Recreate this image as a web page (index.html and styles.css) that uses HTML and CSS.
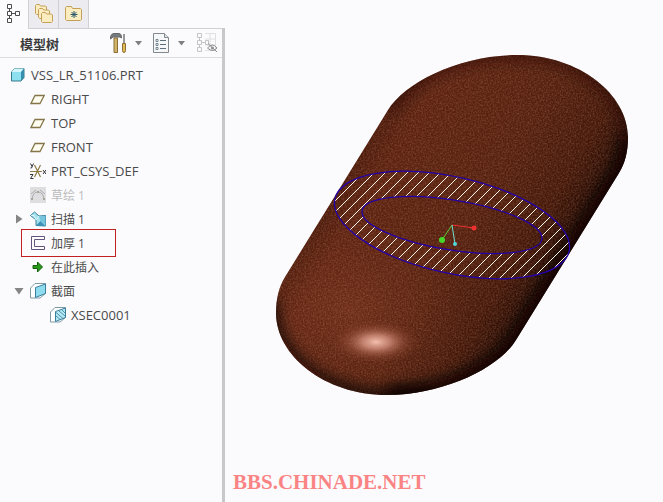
FILE: index.html
```
<!DOCTYPE html>
<html lang="zh-CN">
<head>
    <meta charset="UTF-8">
    <meta name="viewport" content="width=device-width, initial-scale=1.0">
    <title>VSS_LR_51106.PRT</title>
    <link rel="stylesheet" href="styles.css">
</head>
<body>
    <svg width="0" height="0" class="defs" aria-hidden="true">
        <symbol id="plane" viewBox="0 0 16 16">
            <path d="M5 4.500h9.200L10 12.500H1z" fill="#fffdf0" stroke="#85764a" stroke-width="1.300"/>
        </symbol>
        <symbol id="folder" viewBox="0 0 12 11">
            <path d="M.5 9.500v-8l1-1h3l1 1.500h5l1 1v6.500l-1 1h-9z" fill="#fbedc0" stroke="#c4a05a"/>
        </symbol>
        <symbol id="caret" viewBox="0 0 8 5">
            <path d="M0 0h7L3.500 4.500z" fill="#808080"/>
        </symbol>
    </svg>

    <aside class="sidebar">
        <nav class="tabs">
            <button class="tab active" aria-label="模型树">
                <svg width="16" height="20" viewBox="0 0 16 20" fill="#fff" stroke="#4c4c4c">
                    <path d="M3.500 5v10M5 9.500h6" fill="none"/>
                    <path d="M1.500.5h4v4h-4zM1.500 7.500h4v4h-4zM1.500 14.500h4v4h-4zM9.500 7.500h4v4h-4z"/>
                </svg>
            </button>
            <button class="tab" aria-label="文件夹浏览器">
                <svg width="20" height="20" viewBox="0 0 20 20">
                    <use href="#folder" x="1" y="0" width="12" height="11"/>
                    <use href="#folder" x="4" y="4" width="12" height="11"/>
                    <use href="#folder" x="7" y="8" width="12" height="11"/>
                </svg>
            </button>
            <button class="tab" aria-label="收藏夹">
                <svg width="18" height="16" viewBox="0 0 18 16">
                    <path d="M.5 13.500v-12l1-1h5l1 2h8l1 1v10l-1 1h-14z" fill="#fbedc0" stroke="#c4a05a"/>
                    <path d="M9 5v7M5.500 8.500h7M6.500 6l5 5M11.500 6l-5 5" stroke="#27566d"/>
                </svg>
            </button>
        </nav>

        <section class="panel">
            <header class="panel-head">
                <h1>模型树</h1>
                <button class="tool" aria-label="设置">
                    <svg width="17" height="21" viewBox="0 0 17 21">
                        <path d="M4 5h3.500v14.500H4z" fill="#d1b469" stroke="#8b6e32"/>
                        <path d="M.5 3.500Q1.500.5 4 .5h5q2 0 2.500 3v1.500l-1.500-1H3l-2.500 2z" fill="#777c80" stroke="#666"/>
                        <path d="M14 1v10" stroke="#777" stroke-width="1.500"/>
                        <path d="M12.500 10.500h3v7q0 2-1.500 2t-1.500-2z" fill="#e0bd57" stroke="#8b6e32"/>
                    </svg>
                    <svg class="caret" width="8" height="5"><use href="#caret"/></svg>
                </button>
                <button class="tool" aria-label="显示">
                    <svg width="17" height="21" viewBox="0 0 17 21">
                        <path d="M.5.5h11l4 4v15H.5z" fill="#f5f7f8" stroke="#82898e"/>
                        <path d="M11.500.5v4h4" fill="#dce2e5" stroke="#82898e"/>
                        <path d="M7 7.500h6M7 11.500h6M7 15.500h6" stroke="#5c6f7b"/>
                        <path d="M3 6.500h2v2H3zM3 10.500h2v2H3zM3 14.500h2v2H3z" fill="#fff" stroke="#5c6f7b" stroke-width=".8"/>
                    </svg>
                    <svg class="caret" width="8" height="5"><use href="#caret"/></svg>
                </button>
                <button class="tool" aria-label="隐藏" disabled>
                    <svg width="21" height="20" viewBox="0 0 21 20" fill="none" stroke="#c4c4c8">
                        <path d="M8 .5h10.500v17H8M8 6h10M8 12h10M13 1v16" stroke="#e0e0e4"/>
                        <path d="M.5.5h4v4h-4zM.5 7.500h4v4h-4zM.5 14.500h4v4h-4zM2.500 5v2M2.500 12v2M5 9.500h3M8.500 7.500h3v4h-3z"/>
                        <path d="M10.500 15q5-6 9.500 0-4.500 5-9.500 0zM11 10.500l9 8.500" stroke="#8e8e92"/>
                        <circle cx="15.500" cy="15" r="1.500" fill="#8e8e92" stroke="none"/>
                    </svg>
                </button>
            </header>

            <ul class="tree">
                <li class="row root">
                    <svg width="16" height="16" viewBox="0 0 16 16">
                        <path d="M1.500 5l3-3.500h9.500v9l-3 3.500H1.500z" fill="#8de0f0" stroke="#377b8b"/>
                        <path d="M1.500 5l3-3.500H14L11 5z" fill="#d2f6fb"/>
                        <path d="M11 5l3-3.500v9L11 14z" fill="#378eac"/>
                    </svg>
                    <span>VSS_LR_51106.PRT</span>
                </li>
                <li class="row"><svg width="16" height="16"><use href="#plane"/></svg><span>RIGHT</span></li>
                <li class="row"><svg width="16" height="16"><use href="#plane"/></svg><span>TOP</span></li>
                <li class="row"><svg width="16" height="16"><use href="#plane"/></svg><span>FRONT</span></li>
                <li class="row">
                    <svg width="16" height="16" viewBox="0 0 16 16" fill="none">
                        <path d="M0 8.500h12M4.500 2l6 12M10.500 2l-6 12" stroke="#8d7a45" stroke-width="1.200"/>
                        <path d="M.5.5L2 3.500M3.500.5L1.500 5H.5M0 11.500h3L.5 15.500h3M13 7l3 4M16 7l-3 4" stroke="#333"/>
                    </svg>
                    <span>PRT_CSYS_DEF</span>
                </li>
                <li class="row zh suppressed">
                    <svg width="16" height="16" viewBox="0 0 16 16">
                        <path d="M0 0h16v16H0z" fill="#dedee0"/>
                        <path d="M2 12Q3 5 8 5t6 7M1 7l5-4M10 3l5 4" fill="none" stroke="#adadad"/>
                        <path d="M1 11h2v2H1zM13 11h2v2h-2zM7 4h2v2H7z" fill="#aaa69e"/>
                    </svg>
                    <span>草绘 1</span>
                </li>
                <li class="row zh expandable">
                    <button class="twisty" aria-label="展开">
                        <svg width="8" height="10" viewBox="0 0 8 10"><path d="M1 .5v9L7.500 5z" fill="#858585"/></svg>
                    </button>
                    <svg width="16" height="16" viewBox="0 0 16 16">
                        <path d="M.5 4.500L4.500 1l4.500 4 6.500-.5v10.500L6 14.500V9z" fill="#a5e2f0" stroke="#397f9b" stroke-linejoin="round"/>
                        <path d="M6 14.500L10.500 10l5 5z" fill="#3c93b8"/>
                        <path d="M9 5l6.500 0v10L10.500 10z" fill="#74c5dd"/>
                        <path d="M1 4.500h3L6 9l3-4" fill="none" stroke="#eafcff" stroke-width=".8"/>
                    </svg>
                    <span>扫描 1</span>
                </li>
                <li class="row zh marked">
                    <svg width="16" height="16" viewBox="0 0 16 16" fill="#fff" stroke="#65547d">
                        <path d="M14.500 1.500H1.500v13h13v-3H4.500v-7h10z"/>
                    </svg>
                    <span>加厚 1</span>
                </li>
                <li class="row zh">
                    <svg width="16" height="16" viewBox="0 0 16 16">
                        <path d="M3 6.500h4.500v-3.500l5 5-5 5V9.500H3z" fill="#279b1a" stroke="#155e0c"/>
                    </svg>
                    <span>在此插入</span>
                </li>
                <li class="row zh expandable">
                    <button class="twisty" aria-label="折叠">
                        <svg width="10" height="8" viewBox="0 0 10 8"><path d="M.5 1h9L5 7.500z" fill="#858585"/></svg>
                    </button>
                    <svg width="16" height="16" viewBox="0 0 16 16">
                        <path d="M.5 5L5 .5h10.500v10L10 15H.5z" fill="#fff" stroke="#7f9aa5"/>
                        <path d="M5.500 4.500l10-3.500v9.500l-10 4z" fill="#8edced" stroke="#397f9b"/>
                    </svg>
                    <span>截面</span>
                </li>
                <li class="row child">
                    <svg width="16" height="16" viewBox="0 0 16 16">
                        <path d="M.5 5L5 .5h10.500v10L10 15H.5z" fill="#fff" stroke="#7f9aa5"/>
                        <path d="M5.500 4.500l10-3.500v9.500l-10 4z" fill="#b5e9f4" stroke="#397f9b"/>
                        <path d="M6 9l5 4M6 5.500l7 6M9 4l6 5M12 3l3 3" stroke="#357b98" stroke-width=".8"/>
                    </svg>
                    <span>XSEC0001</span>
                </li>
            </ul>
        </section>
    </aside>

    <main class="viewer">
        <svg class="model" viewBox="225 0 438 460" role="img" aria-label="模型">
            <defs>
                <clipPath id="bodyClip">
                    <path d="M285 277L388 110C405 82 460 55 517 55C580 55 628 95 628 137C628 152 625 163 619 173L516 340C499 368 444 395 387 395C324 395 276 355 276 313C276 298 279 287 285 277z"/>
                </clipPath>
                <linearGradient id="side" gradientUnits="userSpaceOnUse" x1="354" y1="165" x2="550" y2="285">
                    <stop offset="0" stop-color="#4c1b0c"/>
                    <stop offset=".12" stop-color="#5c2211"/>
                    <stop offset=".55" stop-color="#54200f"/>
                    <stop offset=".82" stop-color="#43180a"/>
                    <stop offset="1" stop-color="#200903"/>
                </linearGradient>
                <radialGradient id="glow">
                    <stop offset="0" stop-color="#a04a30" stop-opacity=".28"/>
                    <stop offset="1" stop-color="#8a3a22" stop-opacity="0"/>
                </radialGradient>
                <radialGradient id="shine">
                    <stop offset="0" stop-color="#f4c0ae"/>
                    <stop offset=".3" stop-color="#d79482" stop-opacity=".8"/>
                    <stop offset=".65" stop-color="#a75e49" stop-opacity=".35"/>
                    <stop offset="1" stop-color="#7a3420" stop-opacity="0"/>
                </radialGradient>
                <filter id="soft" x="-20%" y="-20%" width="140%" height="140%">
                    <feGaussianBlur stdDeviation="7"/>
                </filter>
                <filter id="grain" x="0" y="0" width="100%" height="100%">
                    <feTurbulence type="fractalNoise" baseFrequency=".6" numOctaves="3" seed="4"/>
                    <feColorMatrix values="0 0 0 0 .7  0 0 0 0 .34  0 0 0 0 .2  1.600 0 0 0 -.55"/>
                </filter>
                <pattern id="hatch" width="11" height="11" patternUnits="userSpaceOnUse" patternTransform="translate(8 0)">
                    <path d="M-1 12L12 -1" stroke="#fff4e6"/>
                </pattern>
                <mask id="ring">
                    <ellipse cx="452" cy="225" rx="120" ry="48" transform="rotate(12.600 452 225)" fill="#fff"/>
                    <ellipse cx="452" cy="225" rx="91" ry="25" transform="rotate(9 452 225)" fill="#000"/>
                </mask>
            </defs>

            <g clip-path="url(#bodyClip)">
                <rect x="270" y="50" width="365" height="350" fill="url(#side)"/>
                <ellipse cx="350" cy="310" rx="120" ry="90" fill="url(#glow)"/>
                <rect x="270" y="50" width="365" height="350" filter="url(#grain)" opacity=".32"/>
                <!-- dark rim, heavier towards the lower right -->
                <path d="M628 137C628 152 625 163 619 173L516 340C499 368 444 395 387 395" fill="none" stroke="#0c0301" stroke-width="16" filter="url(#soft)"/>
                <path d="M430 395C324 405 270 355 272 300" fill="none" stroke="#0c0301" stroke-width="9" filter="url(#soft)"/>
                <path d="M388 110C420 68 470 55 517 55C580 55 628 95 628 140" fill="none" stroke="#220b04" stroke-width="6" filter="url(#soft)"/>
                <ellipse cx="376" cy="342" rx="45" ry="22" fill="url(#shine)"/>
            </g>

            <rect x="325" y="165" width="255" height="120" fill="url(#hatch)" mask="url(#ring)"/>
            <g fill="none" stroke="#2400a8" stroke-width="1.300">
                <ellipse cx="452" cy="225" rx="120" ry="48" transform="rotate(12.600 452 225)"/>
                <ellipse cx="452" cy="225" rx="91" ry="25" transform="rotate(9 452 225)"/>
            </g>

            <!-- spin centre -->
            <path d="M452 225l22 3" stroke="#f03030"/>
            <path d="M452 225l-10 15" stroke="#5fc83c"/>
            <path d="M452 225l3 19" stroke="#6fe0d0"/>
            <circle cx="474" cy="228" r="2.500" fill="#f03030"/>
            <circle cx="442" cy="240" r="3" fill="#45d82a"/>
            <circle cx="455" cy="244" r="2" fill="#4fd8d8"/>
        </svg>
        <p class="site">BBS.CHINADE.NET</p>
    </main>
</body>
</html>
```
FILE: styles.css
```
* {
    box-sizing: border-box;
}
body {
    display: flex;
    min-height: 100vh;
    margin: 0;
    background: #fbfbfe;
    color: #4a4a4a;
    font-family: "Open Sans", "Noto Sans CJK SC", sans-serif;
    font-size: 13px;
}
button {
    padding: 0;
    border: none;
    background: none;
    cursor: pointer;
}
svg {
    display: block;
    flex: none;
}
.defs {
    position: absolute;
}
.sidebar {
    display: flex;
    flex-direction: column;
    flex: none;
    width: 225px;
}
.tabs {
    display: flex;
    height: 28px;
}
.tab {
    display: flex;
    align-items: center;
    justify-content: center;
    width: 30px;
    border-right: 1px solid #d0d0d4;
    background: #ececf0;
}
.tab.active {
    width: 29px;
    margin-bottom: -1px;
    padding-bottom: 1px;
    background: #fbfbfe;
    z-index: 1;
}
.panel {
    flex: 1;
    border-top: 1px solid #d0d0d4;
    border-right: 3px solid #c8c8cb;
}
.panel-head {
    display: flex;
    align-items: center;
    gap: 14px;
    height: 29px;
    padding: 0 4px 0 20px;
    border-bottom: 1px solid #dcdce0;
}
.panel-head h1 {
    margin: 0;
    margin-right: auto;
    font-size: 13px;
    font-weight: bold;
    color: #3c3c3c;
}
.tool {
    display: flex;
    align-items: center;
    gap: 8px;
}
.tool + .tool {
    margin-left: -4px;
}
.tool:disabled {
    margin-left: -3px;
    cursor: default;
}
.tree {
    margin: 0;
    padding: 5px 0;
    list-style: none;
}
.row {
    display: flex;
    align-items: center;
    gap: 5px;
    height: 24px;
    padding-left: 30px;
    position: relative;
    white-space: nowrap;
}
.row.root {
    padding-left: 10px;
}
.row.expandable {
    padding-left: 13px;
}
.row.child {
    padding-left: 50px;
}
.zh {
    font-size: 12px;
}
.twisty {
    display: flex;
    justify-content: center;
    width: 12px;
}
.suppressed {
    color: #bcbcbc;
}
.marked::after {
    content: "";
    position: absolute;
    top: -2px;
    left: 21px;
    width: 93px;
    height: 26px;
    border: 1px solid #c02020;
}
.viewer {
    display: flex;
    flex-direction: column;
    flex: 1;
    min-width: 0;
}
.model {
    flex: 1;
    width: 100%;
    min-height: 0;
}
.site {
    margin: 0;
    padding: 10px 8px 8px;
    color: #fa8484;
    font-family: "Liberation Serif", serif;
    font-size: 21px;
    font-weight: bold;
    line-height: 24px;
}
```
